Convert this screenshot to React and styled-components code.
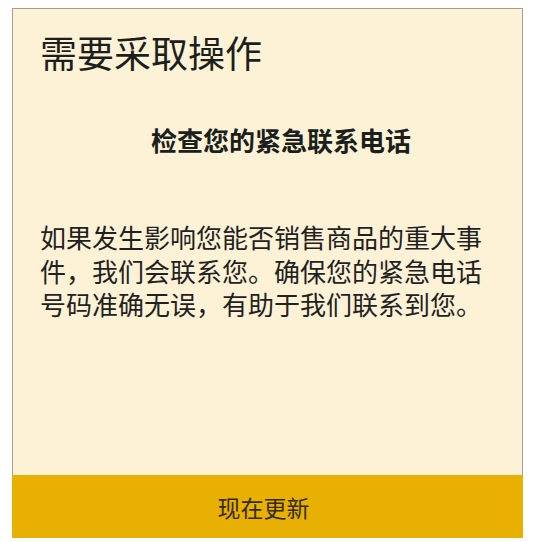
import styled, { createGlobalStyle } from 'styled-components'

const GlobalStyle = createGlobalStyle`
  body {
    margin: 0;
    background: #ffffff;
    font-family: "Noto Sans CJK SC", "Noto Sans", sans-serif;
  }
`

const Card = styled.div`
  box-sizing: border-box;
  width: 511px;
  height: 530px;
  margin: 8px 0 0 12px;
  border: 1px solid #a3a197;
  border-bottom: none;
  background: #fdf2d6;
  display: flex;
  flex-direction: column;
`

const Content = styled.div`
  flex: 1;
  padding: 21px 0 0 27px;
`

const Title = styled.h1`
  margin: 0;
  font-size: 37px;
  line-height: 44px;
  font-weight: 400;
  color: #1c1f1c;
`

const Subtitle = styled.h2`
  margin: 50px 0 0 0;
  text-align: center;
  font-size: 26px;
  line-height: 32px;
  font-weight: 700;
  color: #1a201c;
`

const Body = styled.p`
  margin: 64px 0 0 0;
  width: 456px;
  font-size: 26px;
  line-height: 33.5px;
  color: #1f221f;
`

const UpdateBar = styled.button`
  margin: 0 -1px;
  height: 63px;
  padding: 0 8px 0 0;
  border: none;
  background: #e8b002;
  font-family: inherit;
  font-size: 23px;
  color: #352b00;
  cursor: pointer;
`

export default function App() {
  return (
    <>
      <GlobalStyle />
      <Card>
        <Content>
          <Title>需要采取操作</Title>
          <Subtitle>检查您的紧急联系电话</Subtitle>
          <Body>
            如果发生影响您能否销售商品的重大事件，我们会联系您。确保您的紧急电话号码准确无误，有助于我们联系到您。
          </Body>
        </Content>
        <UpdateBar>现在更新</UpdateBar>
      </Card>
    </>
  )
}
